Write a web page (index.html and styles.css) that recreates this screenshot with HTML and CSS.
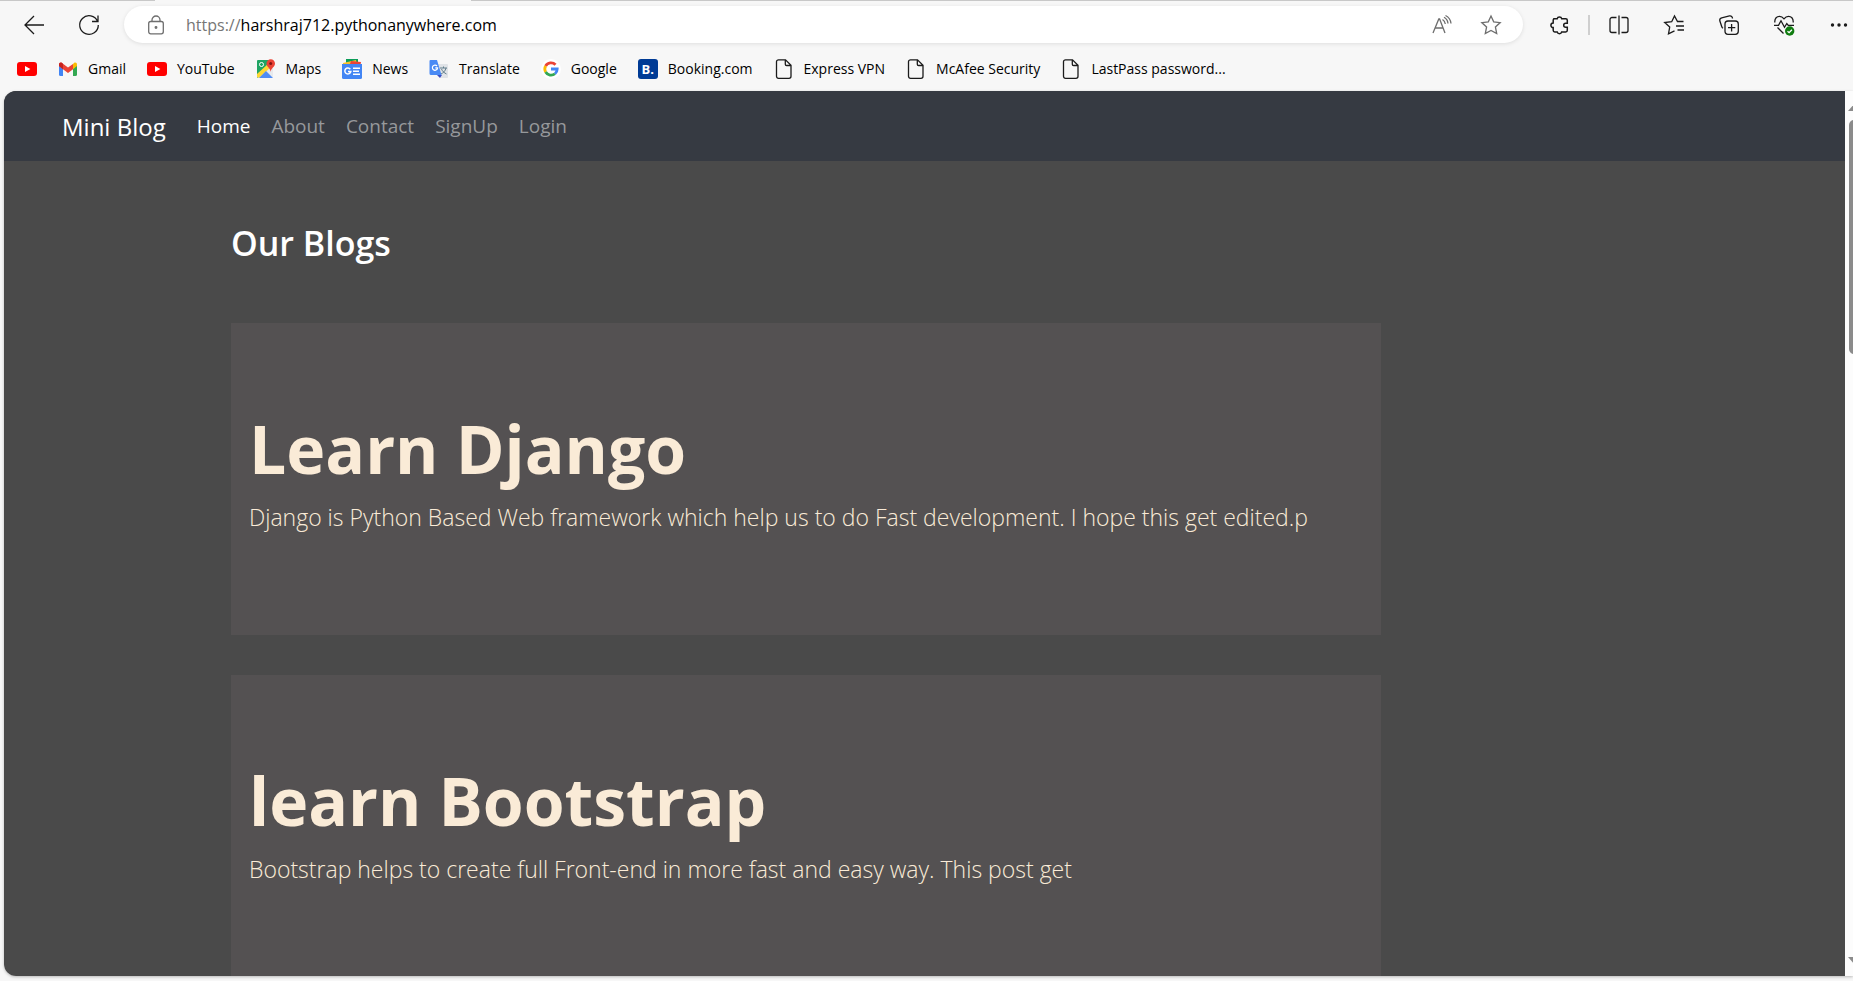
FILE: index.html
```html
<!DOCTYPE html>
<html lang="en">
<head>
<meta charset="utf-8">
<title>Mini Blog</title>
<link rel="stylesheet" href="styles.css">
</head>
<body>
<svg class="defs" aria-hidden="true">
  <symbol id="youtube" viewBox="0 0 20 20"><rect y="3" width="20" height="14" rx="3" fill="#f00"/><path d="M8 7l5.400 3L8 13z" fill="#fff"/></symbol>
  <symbol id="doc" viewBox="0 0 20 20"><path d="M4.500.8h7L17 6.300v11a2 2 0 0 1-2 2H4.500a2 2 0 0 1-2-2v-14.500a2 2 0 0 1 2-2zM11.300 1v4.200a1.300 1.300 0 0 0 1.300 1.300H17" fill="none" stroke="#1b1b1b" stroke-width="1.300"/></symbol>
</svg>
<div class="browser">
  <header class="chrome">
    <div class="tabs-edge"></div>
    <div class="toolbar">
      <button class="tool" aria-label="Back"><svg viewBox="0 0 20 20"><path d="M10 1L1 10l9 9M1 10h19"/></svg></button>
      <button class="tool" aria-label="Refresh"><svg viewBox="0 0 20 20"><path d="M18.600 6.500A9.300 9.300 0 1 0 19.300 10M19 .5v6h-6"/></svg></button>
      <div class="address">
        <svg class="lock" viewBox="0 0 20 20"><rect x="2.700" y="6.500" width="14.600" height="12.300" rx="2"/><path d="M6 6.500V5a4 4 0 0 1 8 0v1.500"/><circle cx="10" cy="12.500" r=".8"/></svg>
        <a class="url" href="#"><span class="scheme">https://</span>harshraj712.pythonanywhere.com</a>
        <button class="tool soft" aria-label="Read aloud"><svg viewBox="0 0 20 20"><path d="M1 18L6.800 4h.8L13 18M3 13h8.200M10.500 4.500a6 6 0 0 1 2.800 4.500M12 2.300a8 8 0 0 1 4 6.200M13.500.5a10 10 0 0 1 5.500 8"/></svg></button>
        <button class="tool soft" aria-label="Add to favorites"><svg viewBox="0 0 20 20"><path d="M10 1l2.700 5.800 6.500.8-4.800 4.400 1.300 6.500L10 15.500l-5.700 3 1.300-6.500L.8 7.600l6.500-.8z"/></svg></button>
      </div>
      <div class="actions">
        <button class="tool" aria-label="Extensions"><svg viewBox="0 0 20 20"><path d="M4.200 3.700h4a2.300 2.300 0 0 1 4.500 0h4a1.600 1.600 0 0 1 1.600 1.600v3h-1.600a2 2 0 0 0 0 4h1.600v3a1.600 1.600 0 0 1-1.600 1.600h-4a2.300 2.300 0 0 1-4.500 0h-2.400a1.600 1.600 0 0 1-1.600-1.600v-2.700a2.300 2.300 0 0 1 0-4.600V5.300a1.600 1.600 0 0 1 1-1.600z" stroke-width="1.500"/></svg></button>
        <span class="divider"></span>
        <button class="tool" aria-label="Split screen"><svg viewBox="0 0 20 20"><path d="M7.500 2.500H3a2 2 0 0 0-2 2v11a2 2 0 0 0 2 2h4.500M12.500 2.500H17a2 2 0 0 1 2 2v11a2 2 0 0 1-2 2h-4.500M10 .5v19"/></svg></button>
        <button class="tool" aria-label="Favorites"><svg viewBox="0 0 20 20"><path d="M19.500 6.500h-6L10.500 1 7.700 6.700l-7 .8 5 4.600-1.200 6.700 6-3M12 11h8M13.500 15h6.500"/></svg></button>
        <button class="tool" aria-label="Collections"><svg viewBox="0 0 20 20"><rect x="6" y="6" width="13.300" height="13.300" rx="3"/><path d="M12.600 9v7.500M9 12.700h7.300M13.500 3.500A2.500 2.500 0 0 0 10.500.9L2.700 2.800A2.600 2.600 0 0 0 .8 5.800l2 6A2.800 2.800 0 0 0 4 13.300"/></svg></button>
        <button class="tool" aria-label="Browser essentials"><svg viewBox="0 0 20 20"><path d="M.8 7.500C.5 3 3 1.300 5.500 1.300c2.200 0 3.500 1.200 4.500 2.500 1-1.300 2.300-2.500 4.500-2.500 2.500 0 5 1.700 4.700 6.200M0 10.300h4.500L7 5.800l3.500 6.500 2.300-3.800 1.500 1.800H20M3.500 12.500l6 6"/><circle cx="15.700" cy="16" r="4.700" fill="#107c10" stroke="none"/><path d="M13.500 16.200l1.600 1.500 2.800-3" stroke="#fff"/></svg></button>
        <button class="tool" aria-label="Settings and more"><svg viewBox="0 0 20 20"><g fill="#1b1b1b" stroke="none"><circle cx="3.500" cy="10" r="1.700"/><circle cx="10" cy="10" r="1.700"/><circle cx="16.500" cy="10" r="1.700"/></g></svg></button>
      </div>
    </div>
    <nav class="bookmarks" aria-label="Bookmarks">
      <a href="#" aria-label="YouTube home"><svg><use href="#youtube"/></svg></a>
      <a href="#"><svg viewBox="0 0 20 20"><path d="M1 6v9.500A1.500 1.500 0 0 0 2.500 17H5V9z" fill="#4285f4"/><path d="M19 6v9.500a1.500 1.500 0 0 1-1.500 1.500H15V9z" fill="#34a853"/><path d="M15 5l1-1c1.500-1 3 0 3 1.500V7l-4 3.200z" fill="#fbbc04"/><path d="M1 7V5.500C1 4 2.500 3 4 4l6 4.600L15 5v5.200L10 14 5 10.200z" fill="#ea4335"/><path d="M1 7V5.500C1 4 2.500 3 4 4l1 .8v5.400z" fill="#c5221f"/></svg>Gmail</a>
      <a href="#"><svg><use href="#youtube"/></svg>YouTube</a>
      <a href="#"><svg viewBox="0 0 20 20"><path d="M2 1h12v8L2 19a1 1 0 0 1-1-1V2a1 1 0 0 1 1-1z" fill="#1fa463"/><path d="M1 17L14 4l3 3v11l-2 1H2z" fill="#e8eaed"/><path d="M1 15L13 4l2 4L3 19l-2-1z" fill="#fdd835"/><path d="M3 19l7-7 7 7z" fill="#4f8df5"/><circle cx="5.500" cy="5.500" r="2" fill="none" stroke="#fff"/><path d="M14.500 13c0-4-4-5-4-8.500a4 4 0 0 1 8.500 0c0 3.500-4 4.500-4.500 8.500z" fill="#ea4335"/><circle cx="14.700" cy="4.500" r="1.500" fill="#811411"/></svg>Maps</a>
      <a href="#"><svg viewBox="0 0 20 20"><path d="M4 0h12v6H4z" fill="#0c9d58"/><path d="M1 4l13-3 1 6H1z" fill="#fbc02d"/><path d="M9 2l10 1-1 5H7z" fill="#ea4335"/><path d="M0 5h20v13.500a1.500 1.500 0 0 1-1.500 1.500h-17A1.500 1.500 0 0 1 0 18.500z" fill="#4285f4"/><path d="M8.300 10.200a3 3 0 1 0 .5 2.300H6M11 9.300h7M11 12.300h6M11 15.300h7" fill="none" stroke="#fff" stroke-width="1.500"/></svg>News</a>
      <a href="#"><svg viewBox="0 0 20 20"><path d="M8 5h10a1 1 0 0 1 1 1v12a1 1 0 0 1-1 1h-6z" fill="#e0e3e7"/><path d="M11 9h7M14.500 7.500V9M17 9c-.5 3-3 5-5 6M12.500 10c1 2.500 3 4 5 5" stroke="#607d8b" fill="none"/><path d="M1.500 1H8l4.500 15H2a1.500 1.500 0 0 1-1.500-1.500V2a1 1 0 0 1 1-1z" fill="#4a8af4"/><path d="M8 16h5l-2 3z" fill="#3a4fc4"/><path d="M8 7a2.600 2.600 0 1 0 .6 1.900H6.300" fill="none" stroke="#fff" stroke-width="1.200"/></svg>Translate</a>
      <a href="#"><svg viewBox="0 0 20 20"><circle cx="10" cy="10" r="10" fill="#fff"/><g fill="none" stroke-width="2.800"><path d="M4.600 7A6.200 6.200 0 0 1 14.500 5.700" stroke="#ea4335"/><path d="M4.600 13a6.200 6.200 0 0 1 0-6" stroke="#fbbc05"/><path d="M14 14.700A6.200 6.200 0 0 1 4.600 13" stroke="#34a853"/><path d="M10 10h6.200a6.200 6.200 0 0 1-2.200 4.700" stroke="#4285f4"/></g></svg>Google</a>
      <a href="#"><span class="booking">B.</span>Booking.com</a>
      <a href="#"><svg><use href="#doc"/></svg>Express VPN</a>
      <a href="#"><svg><use href="#doc"/></svg>McAfee Security</a>
      <a href="#"><svg><use href="#doc"/></svg>LastPass password...</a>
    </nav>
  </header>
  <div class="window">
    <div class="page">
      <nav class="navbar" aria-label="Main">
        <a class="brand" href="#">Mini Blog</a>
        <a class="active" href="#">Home</a>
        <a href="#">About</a>
        <a href="#">Contact</a>
        <a href="#">SignUp</a>
        <a href="#">Login</a>
      </nav>
      <main class="content">
        <h2>Our Blogs</h2>
        <article class="post">
          <h1>Learn Django</h1>
          <p>Django is Python Based Web framework which help us to do Fast development. I hope this get edited.p</p>
        </article>
        <article class="post">
          <h1>learn Bootstrap</h1>
          <p>Bootstrap helps to create full Front-end in more fast and easy way. This post get</p>
        </article>
      </main>
    </div>
    <div class="scrollbar">
      <span class="arrow up"></span>
      <span class="thumb"></span>
      <span class="arrow down"></span>
    </div>
  </div>
</div>
</body>
</html>
```
FILE: styles.css
```css
* { box-sizing: border-box; }
body { margin: 0; background: #f7f7f7; font-family: "Open Sans", "Noto Sans", sans-serif; }
a { color: inherit; text-decoration: none; }
button { border: 0; padding: 0; background: none; }
.defs { display: none; }
.browser { display: flex; flex-direction: column; height: 100vh; overflow: hidden; }
.chrome { flex: none; color: #1b1b1b; }
.tabs-edge { height: 1px; background: linear-gradient(90deg, #c8c8c8 155px, #f7f7f7 155px 471px, #c8c8c8 471px); }
.toolbar { display: flex; align-items: center; height: 47px; padding-left: 24px; gap: 35px; }
.tool { flex: none; width: 20px; height: 20px; }
.tool svg, .lock { display: block; width: 20px; height: 20px; overflow: visible; fill: none; stroke: #1b1b1b; stroke-width: 1.3; }
.soft svg, .lock { stroke: #6e6e6e; }
.address { flex: 1; display: flex; align-items: center; height: 37px; margin-left: -10px; padding: 0 22px; border-radius: 19px; background: #fff; box-shadow: 0 1px 4px #0000001a; gap: 29px; }
.url { flex: 1; font-size: 16px; color: #000; margin-left: -9px; }
.scheme { color: #767676; }
.actions { display: flex; align-items: center; gap: 35px; margin-left: -9px; margin-right: 4px; }
.divider { width: 2px; height: 20px; margin: 0 -16px; background: #cfcfcf; }
.bookmarks { display: flex; gap: 21px; height: 43px; padding: 0 17px 2px; align-items: center; font-size: 14px; color: #000; white-space: nowrap; }
.bookmarks a { display: flex; align-items: center; gap: 10px; }
.bookmarks svg, .booking { flex: none; width: 20px; height: 20px; }
.booking { border-radius: 3px; background: #003b95; color: #fff; font-size: 13px; font-weight: 700; line-height: 20px; text-align: center; }
.window { flex: 1; min-height: 0; display: flex; margin: 0 0 5px 4px; border-radius: 12px 0 0 12px; overflow: hidden; box-shadow: 0 1px 3px #00000040; }
.page { flex: 1; min-width: 0; overflow: hidden; background: #4a4a4a; }
.navbar { display: flex; align-items: center; height: 70px; padding: 0 58px; background: #363a42; color: #96989b; font-size: 19px; gap: 21px; }
.brand { font-size: 24px; color: #fff; margin-right: 10px; }
.active { color: #fff; }
.content { max-width: 1387px; margin: 0 auto; padding-top: 60px; color: #fff; }
h2 { margin: 0 0 58px; font-size: 34px; line-height: 44px; font-weight: 600; }
.post { max-width: 1150px; height: 312px; margin-bottom: 40px; padding: 81px 18px; background: #545152; color: #faebd7; }
.post h1 { margin: 0; font-size: 66px; line-height: 88px; font-weight: 700; }
.post p { margin: 6px 0 0; font-size: 23px; line-height: 38px; font-weight: 300; }
.scrollbar { flex: none; width: 8px; display: flex; flex-direction: column; background: #fcfcfc; padding: 12px 0 11px 4px; overflow: hidden; }
.arrow { width: 14px; height: 8px; margin-left: -1px; background: #8b8b8b; }
.up { clip-path: polygon(50% 0, 100% 100%, 0 100%); }
.down { clip-path: polygon(0 0, 100% 0, 50% 100%); margin-top: auto; }
.thumb { width: 11px; height: 234px; margin-top: 9px; border-radius: 5px; background: #8b8b8b; }
```
